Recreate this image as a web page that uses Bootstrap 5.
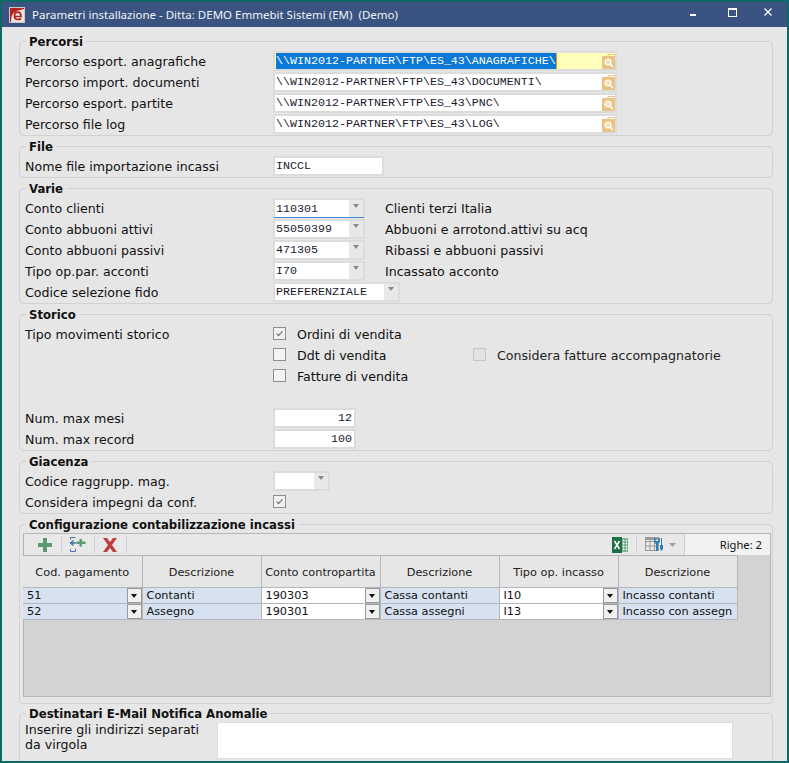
<!DOCTYPE html>
<html lang="it">
<head>
<meta charset="UTF-8">
<meta name="viewport" content="width=device-width, initial-scale=1">
<title>Parametri installazione</title>
<link href="https://cdn.jsdelivr.net/npm/bootstrap@5.3.2/dist/css/bootstrap.min.css" rel="stylesheet">
<style>
  html, body { height: 763px; overflow: hidden; background: #0b6a68; }
  body { font-family: "DejaVu Sans", sans-serif; font-size: 12.6px; color: #111; line-height: 1.2; }

  .finestra { height: 763px; padding: 2px; display: flex; flex-direction: column; }
  .titolo { height: 25px; background: #3b5380; color: #f0f3f8; font-family: "Noto Sans", sans-serif; font-size: 11.5px; padding-left: 7px; gap: 7px; flex: none; }
  .titolo-btn { position: absolute; top: 0; }
  .contenuto { flex: 1; background: #e6e6e6; padding: 7px 14px 0 17px; overflow: hidden; }

  fieldset.gruppo { border: 1px solid #d2d2d2; border-radius: 4px; padding: 1px 0 1px 5px; margin: 0 0 3px 0; min-width: 0; }
  fieldset.gruppo legend { float: none; width: auto; font-size: 11.7px; font-weight: 700; line-height: 13px; margin: 0 0 0 1px; padding: 2px 3px 0; color: #111; }
  fieldset.gruppo-griglia { padding-bottom: 6px; margin-bottom: 2px; }
  fieldset.gruppo-mail { padding-bottom: 8px; }

  .riga { height: 21px; display: flex; align-items: center; }
  .etichetta { width: 248px; flex: none; white-space: nowrap; padding-top: 2px; }
  .campo { height: 20px; align-self: flex-end; background: #fff; border: 2px solid #dcdcdc; font-family: "Liberation Mono", monospace; font-size: 11.67px; line-height: 16px; padding: 0 0 0 1px; color: #1a1a2e; white-space: pre; flex: none; display: flex; align-items: center; overflow: hidden; }
  .campo-path { width: 344px; }
  .campo-file { width: 111px; }
  .campo-combo { width: 92px; padding-right: 0; }
  .campo-fido { width: 127px; }
  .campo-num { width: 83px; justify-content: flex-end; padding-right: 2px; }
  .campo-mag { width: 57px; }
  .campo-attivo { background: #ffffb9; }
  .selezione { background: #0a78d7; color: #fff; border-right: 1px solid #f08a24; }
  .lente { width: 13px; height: 17px; flex: none; margin-left: auto; }
  .freccia { width: 14px; align-self: stretch; background: #e8e8e8; margin-left: auto; flex: none; display: flex; align-items: center; justify-content: center; padding-bottom: 6px; }
  .freccia::after, .freccia-cella::after { content: ""; border: 3px solid transparent; border-top: 4px solid #8a8a8a; border-bottom: 0; }
  .focus-sotto { border-bottom: 1px solid #3d8bd4; }
  .nota { margin-left: 20px; white-space: nowrap; padding-top: 2px; }

  .spunta { appearance: none; width: 13px; height: 13px; border: 1px solid #8f8f8f; background: #f4f4f4; margin: 0; flex: none; display: block; }
  .spunta:checked { background: #f0f0f0 url("data:image/svg+xml,%3Csvg xmlns='http://www.w3.org/2000/svg' viewBox='0 0 13 13'%3E%3Cpath d='M3 6.500l2.400 2.400L10 3.800' fill='none' stroke='%23555' stroke-width='1.200'/%3E%3C/svg%3E") center no-repeat; }
  .spunta:disabled { background: #e2e2e2; border-color: #c6c6c6; }
  .voce { gap: 11px; width: 200px; display: flex; align-items: center; white-space: nowrap; }
  .voce span, .voce-off span { padding-top: 2px; }
  .voce-off { color: #222; gap: 11px; display: flex; align-items: center; white-space: nowrap; }

  .griglia { margin: 0 0 0 -2px; width: 748px; height: 164px; background: #d3d3d3; border: 1px solid #b4b6ba; display: flex; flex-direction: column; }
  .griglia-barra { height: 21px; background: #e8e8e8; flex: none; position: relative; }
  .barra-sep { width: 1px; height: 17px; background: #d0d0d0; flex: none; }
  .righe-tot { font-family: "Noto Sans", sans-serif; font-size: 11.2px; width: 86px; align-self: stretch; background: #f2f2f2; border-left: 1px solid #cfcfcf; display: flex; align-items: center; justify-content: flex-end; padding-right: 8px; }
  .griglia table { border-collapse: collapse; table-layout: fixed; width: 714px; margin-left: -1px; font-size: 11.3px; color: #111; }
  .griglia col { width: 119px; }
  .griglia th { height: 32px; background: #e6e6e6; font-weight: 400; text-align: center; border: 1px solid #b4b6ba; border-left: 0; padding: 2px 0 0; color: #222; }
  .griglia td { height: 16px; background: #d6e2f0; border-right: 1px solid #b4b6ba; border-bottom: 1px solid #b4b6ba; padding: 0 0 0 4px; white-space: nowrap; overflow: hidden; line-height: 14px; }
  .griglia td.cella-bianca { background: #fff; }
  .griglia td.cella-combo { position: relative; padding-right: 16px; }
  .freccia-cella { position: absolute; right: 0; top: 0; width: 15px; height: 15px; background: #f0f0f0; border: 1px solid #9a9a9a; display: flex; align-items: center; justify-content: center; }
  .freccia-cella::after { border-top-color: #111; }
  .spazio-9 { margin-left: 9px; }
  .spazio-7 { margin-left: 7px; }
  .spazio-8 { margin-left: 8px; }

  .testo-mail { width: 192px; flex: none; line-height: 15px; padding-right: 14px; }
  .area-mail { width: 516px; height: 37px; background: #fff; border: 1px solid #dcdcdc; flex: none; }
</style>
</head>
<body>

<div class="finestra">
  <div class="titolo d-flex align-items-center position-relative">
    <svg width="16" height="16" viewBox="0 0 16 16">
      <rect width="16" height="16" fill="#c9c9c9"/>
      <rect x="1" y="1" width="14" height="14" fill="#b5201f"/>
      <path d="M2 13 Q2 4 13 2.500 L15 2 V15 H2 Z" fill="#e9e4e0"/>
      <path d="M6 9.500h6c0-3-1.400-4.300-3.200-4.300C6.800 5.200 5.500 7 5.500 9c0 2.300 1.500 3.500 3.500 3.500 1.300 0 2.300-.4 3-1" fill="none" stroke="#b5201f" stroke-width="1.700"/>
    </svg>
    <span>Parametri installazione - Ditta: DEMO Emmebit Sistemi (EM)&nbsp; (Demo)</span>
    <svg class="titolo-btn" style="left:686px" width="14" height="25" viewBox="0 0 14 25"><rect x="2" y="12" width="6" height="2" fill="#fff"/></svg>
    <svg class="titolo-btn" style="left:725px" width="14" height="25" viewBox="0 0 14 25"><rect x="1.500" y="6.500" width="8" height="8" fill="none" stroke="#fff"/><rect x="1" y="6" width="9" height="2" fill="#fff"/></svg>
    <svg class="titolo-btn" style="left:760px" width="14" height="25" viewBox="0 0 14 25"><path d="M2.500 6.500l7 7m0-7l-7 7" stroke="#fff" stroke-width="1.200"/></svg>
  </div>

  <div class="contenuto">
    <fieldset class="gruppo">
      <legend>Percorsi</legend>
      <div class="riga"><span class="etichetta">Percorso esport. anagrafiche</span>
        <div class="campo campo-path campo-attivo"><span class="selezione">\\WIN2012-PARTNER\FTP\ES_43\ANAGRAFICHE\</span>
          <svg class="lente" viewBox="0 0 13 17"><use href="#icona-lente"/></svg></div></div>
      <div class="riga"><span class="etichetta">Percorso import. documenti</span>
        <div class="campo campo-path">\\WIN2012-PARTNER\FTP\ES_43\DOCUMENTI\<svg class="lente" viewBox="0 0 13 17"><use href="#icona-lente"/></svg></div></div>
      <div class="riga"><span class="etichetta">Percorso esport. partite</span>
        <div class="campo campo-path">\\WIN2012-PARTNER\FTP\ES_43\PNC\<svg class="lente" viewBox="0 0 13 17"><use href="#icona-lente"/></svg></div></div>
      <div class="riga"><span class="etichetta">Percorso file log</span>
        <div class="campo campo-path">\\WIN2012-PARTNER\FTP\ES_43\LOG\<svg class="lente" viewBox="0 0 13 17"><use href="#icona-lente"/></svg></div></div>
    </fieldset>

    <fieldset class="gruppo">
      <legend>File</legend>
      <div class="riga"><span class="etichetta">Nome file importazione incassi</span>
        <div class="campo campo-file">INCCL</div></div>
    </fieldset>

    <fieldset class="gruppo">
      <legend>Varie</legend>
      <div class="riga"><span class="etichetta">Conto clienti</span>
        <div class="campo campo-combo focus-sotto">110301<span class="freccia"></span></div><span class="nota">Clienti terzi Italia</span></div>
      <div class="riga"><span class="etichetta">Conto abbuoni attivi</span>
        <div class="campo campo-combo">55050399<span class="freccia"></span></div><span class="nota">Abbuoni e arrotond.attivi su acq</span></div>
      <div class="riga"><span class="etichetta">Conto abbuoni passivi</span>
        <div class="campo campo-combo">471305<span class="freccia"></span></div><span class="nota">Ribassi e abbuoni passivi</span></div>
      <div class="riga"><span class="etichetta">Tipo op.par. acconti</span>
        <div class="campo campo-combo">I70<span class="freccia"></span></div><span class="nota">Incassato acconto</span></div>
      <div class="riga"><span class="etichetta">Codice selezione fido</span>
        <div class="campo campo-fido">PREFERENZIALE<span class="freccia"></span></div></div>
    </fieldset>

    <fieldset class="gruppo">
      <legend>Storico</legend>
      <div class="riga"><span class="etichetta">Tipo movimenti storico</span>
        <label class="voce"><input class="spunta" type="checkbox" checked><span>Ordini di vendita</span></label></div>
      <div class="riga"><span class="etichetta"></span>
        <label class="voce"><input class="spunta" type="checkbox"><span>Ddt di vendita</span></label>
        <label class="voce-off"><input class="spunta" type="checkbox" disabled><span>Considera fatture accompagnatorie</span></label></div>
      <div class="riga"><span class="etichetta"></span>
        <label class="voce"><input class="spunta" type="checkbox"><span>Fatture di vendita</span></label></div>
      <div class="riga"></div>
      <div class="riga"><span class="etichetta">Num. max mesi</span><div class="campo campo-num">12</div></div>
      <div class="riga"><span class="etichetta">Num. max record</span><div class="campo campo-num">100</div></div>
    </fieldset>

    <fieldset class="gruppo">
      <legend>Giacenza</legend>
      <div class="riga"><span class="etichetta">Codice raggrupp. mag.</span><div class="campo campo-mag"><span class="freccia"></span></div></div>
      <div class="riga"><span class="etichetta">Considera impegni da conf.</span><input class="spunta" type="checkbox" checked></div>
    </fieldset>

    <fieldset class="gruppo gruppo-griglia">
      <legend>Configurazione contabilizzazione incassi</legend>
      <div class="griglia">
        <div class="griglia-barra d-flex align-items-center">
          <svg style="margin-left:14px" width="14" height="14" viewBox="0 0 14 14"><path d="M5 0h4v5h5v4H9v5H5V9H0V5h5z" fill="#5c9a72"/></svg>
          <span class="barra-sep spazio-9"></span>
          <svg class="spazio-7" width="17" height="17" viewBox="0 0 17 17"><path d="M1.500 1.500h5M1.500 1.500v2M1.500 13v2.500h5V13" fill="none" stroke="#4c6fae"/><path d="M1 7h6M1.500 7l3-2.500M1.500 7l3 2.500" fill="none" stroke="#4c6fae" stroke-width="1.500"/><path d="M10.500 3h2.500v2.500h3.500V8H13v2.500h-2.500V8H7.500V5.500h3z" fill="#5c9a72"/></svg>
          <span class="barra-sep spazio-8"></span>
          <svg class="spazio-7" width="16" height="14" viewBox="0 0 16 14"><path d="M1 0h4l3 4 3-4h4l-5 7 5 7h-4L8 10l-3 4H1l5-7z" fill="#bb3f3f"/></svg>
          <span class="barra-sep spazio-8"></span>
          <span class="ms-auto d-flex align-items-center">
            <svg width="16" height="16" viewBox="0 0 16 16"><rect x="7" y="2" width="9" height="12" fill="#fff" stroke="#2f7d4f"/><path d="M10 2v12M13 2v12M7 5h9M7 8h9M7 11h9" stroke="#2f7d4f" stroke-width=".8"/><rect y="0" width="10" height="16" fill="#1d7145"/><path d="M2.500 4l5 8m0-8l-5 8" stroke="#fff" stroke-width="1.500"/></svg>
            <span class="barra-sep ms-2"></span>
            <svg class="ms-2" width="20" height="15" viewBox="0 0 20 15"><rect x=".5" y=".5" width="13" height="13" fill="#e8e8e8" stroke="#9a9a9a"/><path d="M.5 4.500h13M.5 9h13M5 .5v13M9.500 .5v13" stroke="#9a9a9a"/><rect y="0" width="14" height="3" fill="#9a9a9a"/><path d="M9 1v4l2 2v7h2V7l2-2V1h-1.500v3h-3V1zM16 1v7h-1v4l1.500 2 1.500-2V8h-1V1z" fill="#2f7db5"/></svg>
            <svg class="ms-1 me-2" width="7" height="4" viewBox="0 0 7 4"><path d="M0 0h7L3.500 4z" fill="#a0a0a0"/></svg>
          </span>
          <span class="righe-tot">Righe: 2</span>
        </div>
        <table>
          <colgroup><col><col><col><col><col><col></colgroup>
          <thead>
            <tr><th>Cod. pagamento</th><th>Descrizione</th><th>Conto contropartita</th><th>Descrizione</th><th>Tipo op. incasso</th><th>Descrizione</th></tr>
          </thead>
          <tbody>
            <tr>
              <td class="cella-combo">51<span class="freccia-cella"></span></td><td>Contanti</td>
              <td class="cella-bianca cella-combo">190303<span class="freccia-cella"></span></td><td>Cassa contanti</td>
              <td class="cella-bianca cella-combo">I10<span class="freccia-cella"></span></td><td>Incasso contanti</td>
            </tr>
            <tr>
              <td class="cella-combo">52<span class="freccia-cella"></span></td><td>Assegno</td>
              <td class="cella-bianca cella-combo">190301<span class="freccia-cella"></span></td><td>Cassa assegni</td>
              <td class="cella-bianca cella-combo">I13<span class="freccia-cella"></span></td><td>Incasso con assegn</td>
            </tr>
          </tbody>
        </table>
      </div>
    </fieldset>

    <fieldset class="gruppo gruppo-mail">
      <legend>Destinatari E-Mail Notifica Anomalie</legend>
      <div class="d-flex">
        <span class="testo-mail">Inserire gli indirizzi separati da virgola</span>
        <div class="area-mail"></div>
      </div>
    </fieldset>
  </div>
</div>

<svg width="0" height="0" class="position-absolute">
  <symbol id="icona-lente" viewBox="0 0 13 17">
    <rect y="3" width="13" height="14" fill="#e8c384"/>
    <path d="M6 3V1.500h7V3" fill="none" stroke="#e8c384"/>
    <circle cx="6" cy="9" r="3" fill="#f3e2bf" stroke="#fff" stroke-width="1.200"/>
    <path d="M8 11.200l3 2.800" stroke="#fff" stroke-width="1.500"/>
  </symbol>
</svg>

<script src="https://cdn.jsdelivr.net/npm/bootstrap@5.3.2/dist/js/bootstrap.bundle.min.js"></script>
</body>
</html>
